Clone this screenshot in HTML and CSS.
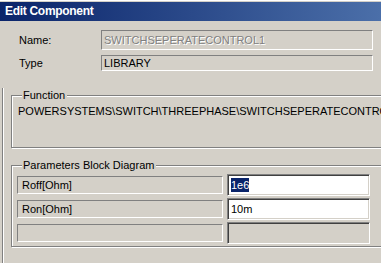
FILE: index.html
```html
<!DOCTYPE html>
<html lang="en">
<head>
    <meta charset="UTF-8">
    <title>Edit Component</title>
    <link rel="stylesheet" href="styles.css">
</head>
<body>
    <div class="window">
        <div class="titlebar">Edit Component</div>

        <div class="header">
            <div class="row">
                <span class="label">Name:</span>
                <div class="field name-field">SWITCHSEPERATECONTROL1</div>
            </div>
            <div class="row type-row">
                <span class="label">Type</span>
                <div class="field type-field">LIBRARY</div>
            </div>
        </div>

        <div class="panel">
            <fieldset class="group function-group">
                <legend>Function</legend>
                <div class="function-text">POWERSYSTEMS\SWITCH\THREEPHASE\SWITCHSEPERATECONTROL1</div>
            </fieldset>

            <fieldset class="group params-group">
                <legend>Parameters Block Diagram</legend>
                <div class="param">
                    <div class="param-name">Roff[Ohm]</div>
                    <div class="param-value"><span class="selected">1e6</span></div>
                </div>
                <div class="param">
                    <div class="param-name">Ron[Ohm]</div>
                    <div class="param-value">10m</div>
                </div>
                <div class="param">
                    <div class="param-name"></div>
                    <div class="param-value empty"></div>
                </div>
            </fieldset>
        </div>
    </div>
</body>
</html>
```

FILE: styles.css
```css
body {
    margin: 0;
    overflow: hidden;
    background-color: #d4d0c8;
    font-family: "Liberation Sans", Arial, sans-serif;
    font-size: 11px;
    color: #000;
}
.window {
    width: 420px;
    height: 263px;
    background-color: #d4d0c8;
    border-top: 1px solid #fff;
    padding-top: 1px;
}
.titlebar {
    height: 19px;
    line-height: 19px;
    padding-left: 5px;
    font-size: 12px;
    font-weight: bold;
    letter-spacing: -0.3px;
    color: #fff;
    background: linear-gradient(to right, #0a246a 0px, #4b6fa9 381px, #4b6fa9 420px);
}
.header {
    padding-top: 9px;
}
.row {
    display: flex;
    align-items: center;
}
.type-row {
    margin-top: 5px;
}
.label {
    width: 82px;
    padding-left: 19px;
}
.field {
    width: 268px;
    padding-left: 2px;
    border: 1px solid;
    border-color: #808080 #fff #fff #808080;
    white-space: nowrap;
}
.name-field {
    height: 18px;
    line-height: 18px;
    color: #808080;
    text-shadow: 1px 1px 0 #fff;
}
.type-field {
    height: 14px;
    line-height: 14px;
}
.panel {
    margin-top: 17px;
    margin-left: 2px;
    padding-top: 1px;
    border-left: 1px solid #808080;
    box-shadow: inset 1px 0 0 #fff;
    height: 200px;
}
.group {
    margin: 0 0 0 8px;
    padding: 0 0 0 5px;
    border: 1px solid #808080;
    box-shadow: inset 1px 1px 0 #fff, 1px 1px 0 #fff;
}
.group legend {
    padding: 0 2px 0 1px;
    margin-left: 5px;
    line-height: 13px;
    background-color: #d4d0c8;
}
.function-group {
    padding-top: 3px;
    height: 54px;
}
.function-text {
    line-height: 13px;
    white-space: nowrap;
    margin-left: 1px;
}
.params-group {
    margin-top: 11px;
    padding-top: 2px;
}
.param {
    display: flex;
    align-items: center;
    gap: 4px;
    margin-bottom: 2px;
}
.param-name {
    width: 200px;
    height: 16px;
    line-height: 16px;
    padding-left: 4px;
    border: 1px solid;
    border-color: #808080 #fff #fff #808080;
}
.param-value {
    width: 138px;
    height: 20px;
    line-height: 20px;
    padding-left: 1px;
    border: 1px solid;
    border-color: #808080 #fff #fff #808080;
    box-shadow: inset 1px 1px 0 #404040, inset -1px -1px 0 #d4d0c8;
    background-color: #fff;
    padding-left: 3px;
}
.param-value.empty {
    background-color: #d4d0c8;
}
.selected {
    background-color: #0a246a;
    color: #fff;
    padding: 1px 0;
}
```
